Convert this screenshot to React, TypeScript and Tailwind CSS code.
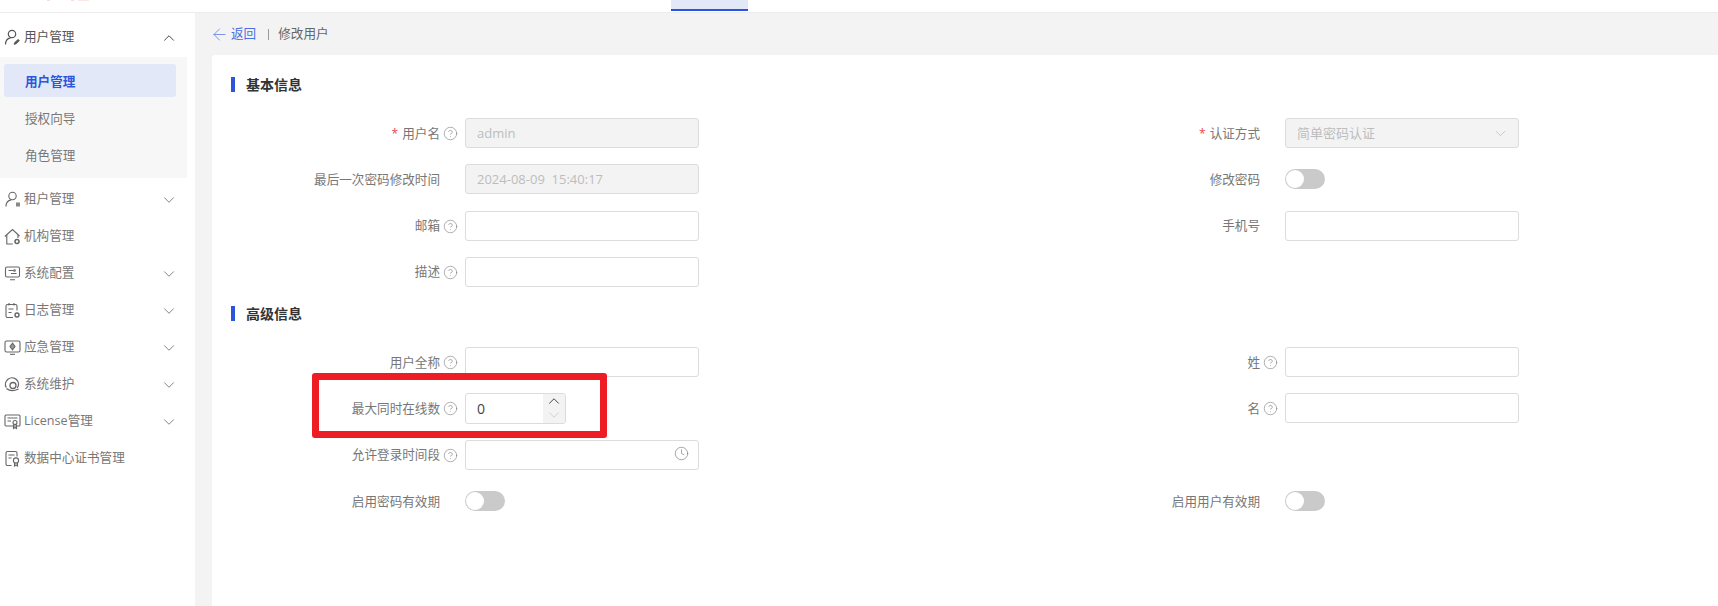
import React from 'react';
import { ArrowLeft, ChevronDown, ChevronUp, CircleHelp, Clock } from 'lucide-react';

const FONT = 'font-["Open_Sans","Noto_Sans_CJK_SC",sans-serif]';

const UserPenIcon = () => (
  <svg viewBox="0 0 17 17" className="w-[17px] h-[17px] shrink-0" fill="none" stroke="#555" strokeWidth="1.2">
    <circle cx="8" cy="5" r="3.700" />
    <path d="M1.500 15.500c0-3.600 2-6 5-6.600" />
    <path d="M10 15.500l.6-1.900 3.500-3.300 1.400 1.400-3.500 3.300z" fill="#555" stroke="#555" strokeWidth=".6" />
  </svg>
);

const UserTagIcon = () => (
  <svg viewBox="0 0 17 17" className="w-[17px] h-[17px] shrink-0" fill="none" stroke="#666" strokeWidth="1.100">
    <circle cx="8.500" cy="5" r="3.700" />
    <path d="M2 15.500c0-3.600 2-6 5.200-6.600" />
    <rect x="12" y="11.500" width="4" height="4" fill="#888" stroke="none" />
  </svg>
);

const HouseIcon = () => (
  <svg viewBox="0 0 17 17" className="w-[17px] h-[17px] shrink-0" fill="none" stroke="#666" strokeWidth="1.100">
    <path d="M.8 8.500L8.500 1.500l7 6.500" />
    <path d="M2.800 7v9h6M14 7v3" />
    <circle cx="13" cy="13.500" r="2" strokeWidth="1.500" />
  </svg>
);

const MonitorIcon = () => (
  <svg viewBox="0 0 17 17" className="w-[17px] h-[17px] shrink-0" fill="none" stroke="#666" strokeWidth="1.100">
    <rect x="1.500" y="2" width="14" height="10" rx="1.500" />
    <path d="M4.500 5.500h5M7 8.500h5.500M6 14.800h5" />
    <circle cx="10.500" cy="5.500" r=".8" />
  </svg>
);

const LogIcon = () => (
  <svg viewBox="0 0 17 17" className="w-[17px] h-[17px] shrink-0" fill="none" stroke="#666" strokeWidth="1.100">
    <path d="M9 15.500H3.500A1.500 1.500 0 0 1 2 14V4a1.500 1.500 0 0 1 1.500-1.500h8A1.500 1.500 0 0 1 13 4v4.500" />
    <path d="M5 1v2.500M10 1v2.500M4.500 7h5M4.500 10.500h3" />
    <circle cx="13" cy="13" r="2" strokeWidth="1.400" />
  </svg>
);

const EmergencyIcon = () => (
  <svg viewBox="0 0 17 17" className="w-[17px] h-[17px] shrink-0" fill="none" stroke="#666" strokeWidth="1.100">
    <rect x="1" y="2" width="15" height="11" rx="1.500" />
    <path d="M8.500 4.200L11 7.500 8.500 10.800 6 7.500z" fill="#999" />
    <path d="M6 15.300h5" />
  </svg>
);

const MaintainIcon = () => (
  <svg viewBox="0 0 17 17" className="w-[17px] h-[17px] shrink-0" fill="none" stroke="#666" strokeWidth="1.300">
    <path d="M2.300 11.500a6.500 6.500 0 1 1 11 .5" />
    <circle cx="9" cy="9.500" r="3" />
    <path d="M2.500 12.500c3 2.500 7.500 2.700 12 .5" />
  </svg>
);

const LicenseIcon = () => (
  <svg viewBox="0 0 17 17" className="w-[17px] h-[17px] shrink-0" fill="none" stroke="#666" strokeWidth="1.100">
    <rect x="1" y="2" width="15" height="11" rx="1" />
    <path d="M3.500 5h10M3.500 8h3.500" />
    <circle cx="11" cy="9.500" r="2" />
    <path d="M9.500 11.500v4l1.500-1 1.500 1v-4" />
  </svg>
);

const CertIcon = () => (
  <svg viewBox="0 0 17 17" className="w-[17px] h-[17px] shrink-0" fill="none" stroke="#666" strokeWidth="1.100">
    <path d="M7.500 15.500h-4A1.500 1.500 0 0 1 2 14V3a1.500 1.500 0 0 1 1.500-1.500h8A1.500 1.500 0 0 1 13 3v3.500" />
    <path d="M4.500 5h6M4.500 8h3" />
    <circle cx="12" cy="10.500" r="2.600" />
    <path d="M10.500 13v3l1.500-1 1.500 1v-3" />
  </svg>
);

const MenuRow = ({ icon, label, arrow }: { icon: React.ReactNode; label: string; arrow?: boolean }) => (
  <div className="h-[37px] flex items-center pl-[4px] pr-[17px] text-[12.600px] text-[#777]">
    {icon}
    <span className="ml-[3px] flex-1 whitespace-nowrap">{label}</span>
    {arrow && <ChevronDown className="w-[18px] h-[18px] text-[#777]" strokeWidth={1.2} />}
  </div>
);

const Field = ({
  label,
  required,
  help,
  children,
}: {
  label: string;
  required?: boolean;
  help?: boolean;
  children: React.ReactNode;
}) => (
  <div className="flex items-center h-[30px]">
    <div className={`w-[253px] shrink-0 flex items-center justify-end text-[12.600px] text-[#777] whitespace-nowrap ${help ? 'pr-[7px]' : 'pr-[25px]'}`}>
      {required && <span className="text-[#e5484d] mr-[4px] text-[12px] pt-[2px]">*</span>}
      <span className="pt-[2px]">{label}</span>
      {help && <CircleHelp className="ml-[3px] mt-[1px] w-[15px] h-[15px] text-[#808080] shrink-0" strokeWidth={1} />}
    </div>
    {children}
  </div>
);

const TextBox = ({ value, disabled, children }: { value?: string; disabled?: boolean; children?: React.ReactNode }) => (
  <div
    className={`w-[234px] h-[30px] border border-[#dcdcdc] rounded-[3px] flex items-center justify-between pl-[11px] pr-[9px] text-[13px] ${
      disabled ? 'bg-[#f3f3f3] text-[#bdbdbd]' : 'bg-white'
    }`}
  >
    <span className="whitespace-pre pt-[1px]">{value}</span>
    {children}
  </div>
);

const Toggle = () => (
  <div className="w-[39.500px] h-[20px] rounded-full bg-[#cacaca] flex items-center pl-[1px]">
    <div className="w-[18px] h-[18px] rounded-full bg-white" />
  </div>
);

const SectionTitle = ({ title }: { title: string }) => (
  <div className="flex items-center pl-[19px] h-[20px]">
    <div className="w-[4px] h-[15px] bg-[#2f54dc]" />
    <span className="ml-[11px] text-[14px] font-bold text-[#333]">{title}</span>
  </div>
);

export default function App() {
  return (
    <div className={`relative w-[1718px] h-[606px] overflow-hidden bg-[#f3f3f3] flex flex-col ${FONT}`}>
      {/* top nav, only its lower edge is in frame */}
      <div className="h-[13px] shrink-0 bg-white border-b border-[#ececec] flex">
        <svg width="110" height="2" className="shrink-0">
          <rect x="47" width="3" height="1" fill="#fadcd9" />
          <rect x="71" width="3" height="1" fill="#fadcd9" />
          <rect x="78" width="11" height="1" fill="#fce8e6" />
        </svg>
        <div className="ml-[561px] w-[77px] h-[11px] bg-[#e2e8f8] border-b-2 border-[#2f54dc]" />
      </div>

      <div className="flex flex-1 min-h-0">
        <aside className="w-[195px] shrink-0 bg-white">
          <div className="h-[44px] flex items-center pl-[4px] pr-[17px] pt-[5px] text-[12.600px] text-[#555]">
            <UserPenIcon />
            <span className="ml-[3px] flex-1">用户管理</span>
            <ChevronUp className="w-[18px] h-[18px] text-[#444]" strokeWidth={1.3} />
          </div>
          <div className="w-[187px] h-[121px] bg-[#f7f7f7] pt-[7px] pl-[4px] pr-[11px] flex flex-col gap-[4px] text-[12.600px] text-[#777]">
            <div className="h-[33px] flex items-center pl-[21px] pt-[4px] rounded-[3px] bg-[#e2e8f8] text-[#2f54dc] font-bold">用户管理</div>
            <div className="h-[33px] flex items-center pl-[21px] pt-[4px]">授权向导</div>
            <div className="h-[33px] flex items-center pl-[21px] pt-[4px]">角色管理</div>
          </div>
          <div className="pt-[3px]">
            <MenuRow icon={<UserTagIcon />} label="租户管理" arrow />
            <MenuRow icon={<HouseIcon />} label="机构管理" />
            <MenuRow icon={<MonitorIcon />} label="系统配置" arrow />
            <MenuRow icon={<LogIcon />} label="日志管理" arrow />
            <MenuRow icon={<EmergencyIcon />} label="应急管理" arrow />
            <MenuRow icon={<MaintainIcon />} label="系统维护" arrow />
            <MenuRow icon={<LicenseIcon />} label="License管理" arrow />
            <MenuRow icon={<CertIcon />} label="数据中心证书管理" />
          </div>
        </aside>

        <main className="flex-1 min-w-0 flex flex-col">
          <div className="h-[42px] shrink-0 flex items-center pl-[15px] text-[12.600px]">
            <ArrowLeft className="w-[19px] h-[19px] text-[#5b7be6]" strokeWidth={1} />
            <span className="ml-[2px] text-[#4a6fe3]">返回</span>
            <span className="ml-[12px] w-px h-[11px] bg-[#999]" />
            <span className="ml-[9px] text-[#666]">修改用户</span>
          </div>

          <div className="flex-1 ml-[17px] bg-white rounded-tl-[3px] pt-[19px]">
            <SectionTitle title="基本信息" />
            <div className="mt-[24px] grid grid-cols-[820px_1fr] auto-rows-[46.300px]">
              <Field label="用户名" required help>
                <TextBox value="admin" disabled />
              </Field>
              <Field label="认证方式" required>
                <TextBox value="简单密码认证" disabled>
                  <ChevronDown className="w-[17px] h-[17px] text-[#bbb]" strokeWidth={1.1} />
                </TextBox>
              </Field>
              <Field label="最后一次密码修改时间">
                <TextBox value="2024-08-09  15:40:17" disabled />
              </Field>
              <Field label="修改密码">
                <Toggle />
              </Field>
              <Field label="邮箱" help>
                <TextBox />
              </Field>
              <Field label="手机号">
                <TextBox />
              </Field>
              <Field label="描述" help>
                <TextBox />
              </Field>
            </div>

            <SectionTitle title="高级信息" />
            <div className="mt-[24px] grid grid-cols-[820px_1fr] auto-rows-[46.300px]">
              <Field label="用户全称" help>
                <TextBox />
              </Field>
              <Field label="姓" help>
                <TextBox />
              </Field>
              <Field label="最大同时在线数" help>
                <div className="w-[101px] h-[31px] border border-[#dcdcdc] rounded-[3px] flex items-center text-[14px] text-[#444] overflow-hidden">
                  <span className="flex-1 pl-[11px] pt-[1px]">0</span>
                  <div className="w-[22px] h-full bg-[#f3f3f3] flex flex-col items-center justify-center">
                    <ChevronUp className="w-[18px] h-[18px] -my-[2px] text-[#444]" strokeWidth={1.3} />
                    <ChevronDown className="w-[18px] h-[18px] -my-[2px] text-[#c4c4c4]" strokeWidth={1} />
                  </div>
                </div>
              </Field>
              <Field label="名" help>
                <TextBox />
              </Field>
              <Field label="允许登录时间段" help>
                <TextBox>
                  <Clock className="w-[15px] h-[15px] -mt-[3px] text-[#808080]" strokeWidth={1.1} />
                </TextBox>
              </Field>
              <div />
              <Field label="启用密码有效期">
                <Toggle />
              </Field>
              <Field label="启用用户有效期">
                <Toggle />
              </Field>
            </div>
          </div>
        </main>
      </div>

      {/* red annotation drawn over the screenshot */}
      <div className="absolute left-[312px] top-[373px] w-[295px] h-[65px] border-[7px] border-[#ee1c25] rounded-[3px]" />
    </div>
  );
}
